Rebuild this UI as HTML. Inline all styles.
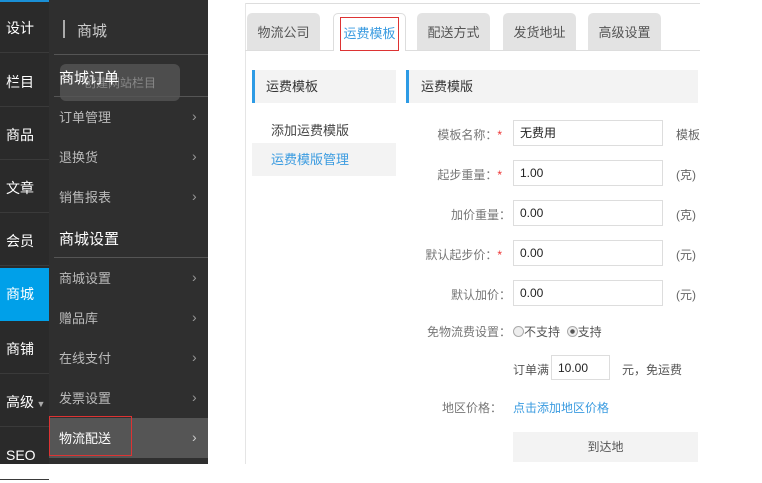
<!DOCTYPE html>
<html><head><meta charset="utf-8"><style>
*{margin:0;padding:0;box-sizing:border-box}
body{width:762px;height:464px;overflow:hidden;background:#fff;font-family:"Liberation Sans","Noto Sans CJK SC",sans-serif;position:relative;font-size:13px;color:#555}
.a{position:absolute}
.nav{left:0;top:0;width:49px;height:464px;background:#2a2a2a}
.nav div{position:absolute;left:0;width:49px;height:53px;color:#fff;font-size:14px;line-height:56px;padding-left:6px;border-bottom:1px solid #3a3a3a}
.menu{left:49px;top:0;width:159px;height:464px;background:#2f2f2f}
.mi{position:absolute;left:10px;color:#bbb;font-size:13px}
.ar{position:absolute;left:143px;color:#999;font-size:14px;line-height:14px;margin-top:1px}
.hd{position:absolute;left:10px;color:#fff;font-size:15px}
.ln{position:absolute;left:5px;width:154px;height:1px;background:#555}
.tab{position:absolute;top:13px;height:37px;width:73px;background:#e3e3e3;border-radius:5px 5px 0 0;text-align:center;line-height:40px;font-size:13px;color:#555}
.lbl{position:absolute;width:120px;left:382px;text-align:right;font-size:12px;color:#777}
.inp{position:absolute;left:513px;width:150px;height:26px;border:1px solid #ddd;padding-left:6px;line-height:24px;font-size:12px;color:#222}
.u{position:absolute;left:676px;font-size:12px;color:#666}
.r{color:#e33}
</style></head><body>
<div class="a" style="left:0;top:0;width:49px;height:2px;background:#1a8fd6;z-index:2"></div>
<div class="a nav">
<div style="top:0">设计</div><div style="top:54px">栏目</div><div style="top:107px">商品</div><div style="top:160px">文章</div><div style="top:213px">会员</div>
<div style="top:268px;background:#00a0e9;border:0;line-height:53px">商城</div>
<div style="top:321px">商铺</div><div style="top:374px">高级<span style="font-size:9px;color:#aaa"> ▼</span></div><div style="top:427px">SEO</div>
</div>
<div class="a menu">
<div class="a" style="left:14px;top:20px;width:2px;height:18px;background:#aaa"></div>
<div class="a" style="left:28px;top:20px;color:#ccc;font-size:15px">商城</div>
<div class="ln" style="top:54px"></div>
<div class="a" style="left:11px;top:64px;width:120px;height:37px;background:#555;border-radius:6px;opacity:.8"></div>
<div class="a" style="left:35px;top:74px;color:#888;font-size:12px">创建网站栏目</div>
<div class="hd" style="top:67px">商城订单</div>
<div class="ln" style="top:96px"></div>
<div class="mi" style="top:107px">订单管理</div><div class="ar" style="top:108px">›</div>
<div class="mi" style="top:147px">退换货</div><div class="ar" style="top:148px">›</div>
<div class="mi" style="top:187px">销售报表</div><div class="ar" style="top:188px">›</div>
<div class="hd" style="top:228px">商城设置</div>
<div class="ln" style="top:257px"></div>
<div class="mi" style="top:268px">商城设置</div><div class="ar" style="top:269px">›</div>
<div class="mi" style="top:308px">赠品库</div><div class="ar" style="top:309px">›</div>
<div class="mi" style="top:348px">在线支付</div><div class="ar" style="top:349px">›</div>
<div class="mi" style="top:388px">发票设置</div><div class="ar" style="top:389px">›</div>
<div class="a" style="left:0;top:418px;width:159px;height:40px;background:#555"></div>
<div class="a" style="left:0;top:416px;width:83px;height:40px;border:1px solid #d33"></div>
<div class="mi" style="top:428px;color:#fff">物流配送</div><div class="ar" style="top:429px;color:#ccc">›</div>
</div>
<div class="a" style="left:245px;top:3px;width:455px;height:1px;background:#ddd"></div>
<div class="a" style="left:245px;top:3px;width:1px;height:461px;background:#e5e5e5"></div>
<div class="a" style="left:245px;top:50px;width:455px;height:1px;background:#ddd"></div>
<div class="tab" style="left:247px">物流公司</div>
<div class="tab" style="left:333px;background:#fff;border:1px solid #ddd;border-bottom:0;height:38px;color:#3a9be0"><span style="display:inline-block;border:1px solid #d33;line-height:32px;margin-top:3px;padding:0 2px;height:34px">运费模板</span></div>
<div class="tab" style="left:417px">配送方式</div>
<div class="tab" style="left:503px">发货地址</div>
<div class="tab" style="left:588px">高级设置</div>
<div class="a" style="left:252px;top:70px;width:144px;height:33px;background:#f3f3f3;border-left:3px solid #2d9be5;line-height:33px;padding-left:11px;font-size:13px;color:#333">运费模板</div>
<div class="a" style="left:271px;top:120px;font-size:13px;color:#444">添加运费模版</div>
<div class="a" style="left:252px;top:143px;width:144px;height:33px;background:#f3f3f3;line-height:33px;padding-left:19px;font-size:13px;color:#3a9be0">运费模版管理</div>
<div class="a" style="left:406px;top:70px;width:292px;height:33px;background:#f3f3f3;border-left:3px solid #2d9be5;line-height:33px;padding-left:12px;font-size:13px;color:#333">运费模版</div>
<div class="lbl" style="top:126px">模板名称：<span class="r">*</span></div><div class="inp" style="top:120px">无费用</div><div class="u" style="top:126px">模板</div>
<div class="lbl" style="top:166px">起步重量：<span class="r">*</span></div><div class="inp" style="top:160px">1.00</div><div class="u" style="top:166px">(克)</div>
<div class="lbl" style="top:206px;left:391px">加价重量：</div><div class="inp" style="top:200px">0.00</div><div class="u" style="top:206px">(克)</div>
<div class="lbl" style="top:246px">默认起步价：<span class="r">*</span></div><div class="inp" style="top:240px">0.00</div><div class="u" style="top:246px">(元)</div>
<div class="lbl" style="top:286px;left:391px">默认加价：</div><div class="inp" style="top:280px">0.00</div><div class="u" style="top:286px">(元)</div>
<div class="lbl" style="top:323px;left:391px">免物流费设置：</div>
<div class="a" style="left:513px;top:323px;font-size:12px;color:#555"><span style="display:inline-block;width:11px;height:11px;border:1px solid #aaa;border-radius:50%;background:#eee;vertical-align:-1px"></span>不支持 &nbsp;<span style="display:inline-block;width:11px;height:11px;border:1px solid #aaa;border-radius:50%;background:radial-gradient(#555 30%,#eee 40%);vertical-align:-1px"></span>支持</div>
<div class="a" style="left:513px;top:361px;font-size:12px;color:#555">订单满</div>
<div class="inp" style="left:551px;top:355px;width:59px;height:25px">10.00</div>
<div class="a" style="left:622px;top:361px;font-size:12px;color:#555">元，免运费</div>
<div class="lbl" style="top:399px;left:382px">地区价格：</div>
<div class="a" style="left:513px;top:399px;font-size:12px;color:#3a9be0">点击添加地区价格</div>
<div class="a" style="left:513px;top:432px;width:185px;height:30px;background:#f3f3f3;text-align:center;line-height:30px;font-size:12px;color:#555">到达地</div>
</body></html>
